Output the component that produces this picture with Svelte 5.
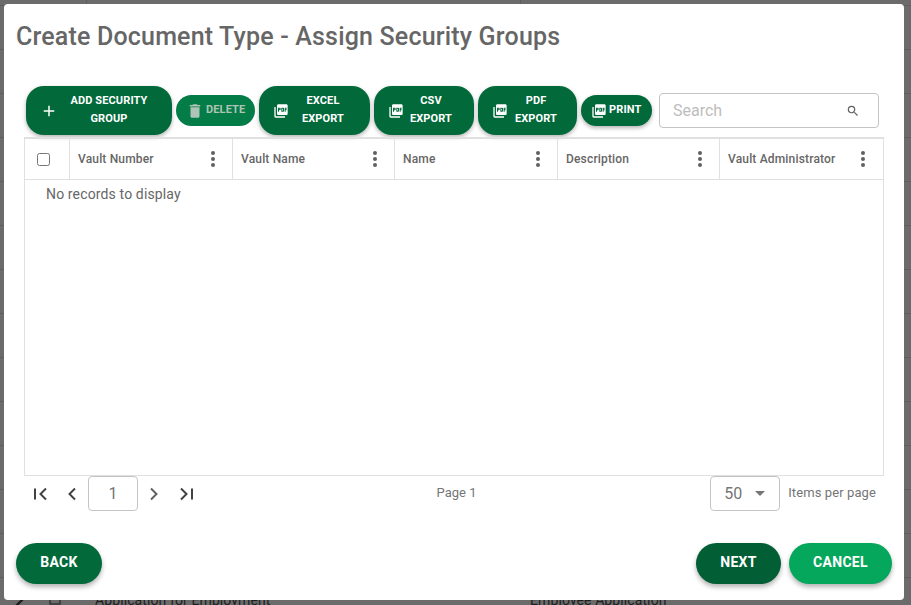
<script>
  const pdf = "M20 2H8c-1.1 0-2 .9-2 2v12c0 1.1.9 2 2 2h12c1.1 0 2-.9 2-2V4c0-1.1-.9-2-2-2zm-8.5 7.5c0 .83-.67 1.5-1.5 1.5H9v2H7.5V7H10c.83 0 1.5.67 1.5 1.5v1zm5 2c0 .83-.67 1.5-1.5 1.5h-2.5V7H15c.83 0 1.5.67 1.5 1.5v3zm4-3H19v1h1.5V11H19v2h-1.5V7h3v1.5zM9 9.5h1v-1H9v1zM4 6H2v14c0 1.1.9 2 2 2h14v-2H4V6zm10 5.5h1v-3h-1v3z";
  const cols = ["Vault Number", "Vault Name", "Name", "Description", "Vault Administrator"];
  const exportsList = [
    { a: "EXCEL", cls: "excel" },
    { a: "CSV", cls: "csv" },
    { a: "PDF", cls: "pdfb" }
  ];
  const rows = Array.from({ length: 13 });
</script>

<div class="page">
  <div class="backrows">
    <div class="backhead"><i></i><i></i></div>
    {#each rows as _}<div class="backrow"></div>{/each}
    <div class="backrow last">
      <svg class="bk1" viewBox="0 0 12 12" width="12" height="12"><path d="M2 11 9 4" stroke="#1c1c1c" stroke-width="2.4" fill="none"/></svg>
      <svg class="bk2" viewBox="0 0 14 14" width="14" height="14"><rect x="2" y="1" width="10" height="9" fill="none" stroke="#1c1c1c"/></svg>
      <span class="bt1">Application for Employment</span>
      <span class="bt2">Employee Application</span>
    </div>
  </div>
</div>

<div class="dialog">
  <h1>Create Document Type - Assign Security Groups</h1>

  <div class="toolbar">
    <button class="btn tall add">
      <svg viewBox="0 0 24 24" width="18" height="18"><path fill="currentColor" d="M19 13h-6v6h-2v-6H5v-2h6V5h2v6h6v2z"/></svg>
      <span>ADD SECURITY GROUP</span>
    </button>
    <button class="btn short del">
      <svg viewBox="0 0 24 24" width="18" height="18"><path fill="currentColor" d="M6 19c0 1.1.9 2 2 2h8c1.1 0 2-.9 2-2V7H6v12zM19 4h-3.5l-1-1h-5l-1 1H5v2h14V4z"/></svg>
      <span>DELETE</span>
    </button>
    {#each exportsList as e}
      <button class="btn tall {e.cls}">
        <svg viewBox="0 0 24 24" width="16" height="16"><path fill="currentColor" d={pdf}/></svg>
        <span>{e.a} EXPORT</span>
      </button>
    {/each}
    <button class="btn short print">
      <svg viewBox="0 0 24 24" width="16" height="16"><path fill="currentColor" d={pdf}/></svg>
      <span>PRINT</span>
    </button>
    <div class="search">
      <span>Search</span>
      <svg viewBox="0 0 24 24" width="14" height="14"><path fill="#616161" d="M15.5 14h-.79l-.28-.27A6.47 6.47 0 0 0 16 9.5 6.5 6.5 0 1 0 9.5 16c1.61 0 3.09-.59 4.23-1.57l.27.28v.79l5 4.99L20.49 19l-4.99-5zm-6 0C7.01 14 5 11.99 5 9.5S7.01 5 9.5 5 14 7.01 14 9.5 11.99 14 9.5 14z"/></svg>
    </div>
  </div>

  <div class="grid">
    <div class="head">
      <div class="cell check"><input type="checkbox" /></div>
      {#each cols as c}
        <div class="cell">
          <span>{c}</span>
          <svg viewBox="0 0 6 18" width="6" height="18"><circle cx="3" cy="3" r="2" fill="#616161"/><circle cx="3" cy="9" r="2" fill="#616161"/><circle cx="3" cy="15" r="2" fill="#616161"/></svg>
        </div>
      {/each}
    </div>
    <div class="empty">No records to display</div>
  </div>

  <div class="pager">
    <div class="pages">
      <svg class="pi first" viewBox="0 0 16 16" width="16" height="16"><path d="M2 2.5v11" stroke="#424242" stroke-width="2" fill="none"/><path d="M13 2.5 7.5 8l5.5 5.5" stroke="#424242" stroke-width="2" fill="none"/></svg>
      <svg class="pi prev" viewBox="0 0 16 16" width="16" height="16"><path d="M11 2.5 5.5 8l5.5 5.5" stroke="#424242" stroke-width="2" fill="none"/></svg>
      <div class="pageinput">1</div>
      <svg class="pi next" viewBox="0 0 16 16" width="16" height="16"><path d="M5 2.5 10.500 8 5 13.500" stroke="#616161" stroke-width="2" fill="none"/></svg>
      <svg class="pi last" viewBox="0 0 16 16" width="16" height="16"><path d="M3 2.5 8.500 8 3 13.500" stroke="#424242" stroke-width="2" fill="none"/><path d="M14 2.500v11" stroke="#424242" stroke-width="2" fill="none"/></svg>
    </div>
    <div class="pageinfo">Page 1</div>
    <div class="sizes">
      <div class="select"><span>50</span><i></i></div>
      <span class="ipp">Items per page</span>
    </div>
  </div>

  <div class="footer">
    <button class="fbtn back">BACK</button>
    <div class="right">
      <button class="fbtn nextb">NEXT</button>
      <button class="fbtn cancel">CANCEL</button>
    </div>
  </div>
</div>

<style>
  :global(body) {
    margin: 0;
    overflow: hidden;
    background: #6b6b6b;
    font-family: Roboto, "Liberation Sans", sans-serif;
  }
  .page {
    height: 605px;
    overflow: hidden;
    background: #6b6b6b;
  }
  .backhead {
    height: 5px;
    border-bottom: 1px solid #5e5e5e;
    display: flex;
    box-sizing: content-box;
  }
  .backhead i {
    display: block;
    width: 1px;
    height: 5px;
    background: #5e5e5e;
    margin-left: 86px;
  }
  .backhead i + i {
    margin-left: 433px;
  }
  .backrow {
    height: 43px;
    border-bottom: 1px solid #5e5e5e;
  }
  .backrow.last {
    position: relative;
    color: #1f1f1f;
    font-size: 14px;
    letter-spacing: 0.1px;
    line-height: 44px;
  }
  .bt1 { position: absolute; left: 95px; top: 0; }
  .bt2 { position: absolute; left: 530px; top: 0; }
  .bk1 { position: absolute; left: 14px; top: 17px; }
  .bk2 { position: absolute; left: 48px; top: 16px; }

  .dialog {
    position: absolute;
    left: 4px;
    top: 4px;
    width: 900px;
    height: 596px;
    box-sizing: border-box;
    background: #fff;
    border-radius: 4px;
    padding: 0 12px;
    display: flex;
    flex-direction: column;
  }
  h1 {
    margin: 0;
    padding-top: 17px;
    height: 82px;
    box-sizing: border-box;
    font-size: 25px;
    line-height: 32px;
    font-weight: 500;
    color: #666;
    letter-spacing: 0.18px;
  }
  .toolbar {
    display: flex;
    align-items: center;
    gap: 4px;
    padding-left: 10px;
    height: 49px;
  }
  .btn {
    border: none;
    color: #fff;
    background: #02693a;
    font-family: inherit;
    font-weight: 700;
    font-size: 11px;
    letter-spacing: 0.12px;
    line-height: 18px;
    display: flex;
    align-items: center;
    padding: 0;
    box-shadow: 0 2px 4px rgba(0, 0, 0, 0.3);
  }
  .btn span { padding-bottom: 2px; }
  .btn.tall {
    height: 49px;
    border-radius: 18px;
    text-align: center;
  }
  .btn.short {
    height: 31px;
    border-radius: 16px;
  }
  .add { width: 146px; padding-left: 14px; }
  .add span { width: 84px; margin-left: 9px; }
  .excel { width: 111px; padding-left: 14px; }
  .excel span { width: 60px; margin-left: 4px; }
  .csv { width: 100px; padding-left: 14px; }
  .csv span { width: 50px; margin-left: 2px; }
  .pdfb { width: 99px; padding-left: 14px; }
  .pdfb span { width: 50px; margin-left: 3px; }
  .del {
    width: 79px;
    padding-left: 10px;
    background: #037c47;
    color: #aec4b6;
    box-shadow: none;
  }
  .del span { margin-left: 2px; }
  .print { width: 71px; padding-left: 10px; }
  .print span { margin-left: 2px; }

  .search {
    margin-left: 3px;
    width: 220px;
    height: 35px;
    box-sizing: border-box;
    border: 1px solid #c4c4c4;
    border-radius: 4px;
    display: flex;
    align-items: center;
    justify-content: space-between;
    padding: 0 18px 0 13px;
    font-size: 16px;
    color: #bdbdbd;
    background: #fff;
  }

  .grid {
    margin: 2px 8px 0 8px;
    height: 339px;
    width: 860px;
    box-sizing: border-box;
    border: 1px solid #e0e0e0;
    border-top-width: 2px;
    color: #666;
  }
  .head {
    display: grid;
    grid-template-columns: 45px 163px 162px 163px 162px 1fr;
    height: 41px;
    box-sizing: border-box;
    border-bottom: 1px solid #e0e0e0;
  }
  .cell {
    border-right: 1px solid #e0e0e0;
    display: flex;
    align-items: center;
    justify-content: space-between;
    padding: 0 16px 0 8px;
    font-size: 12px;
    letter-spacing: 0.17px;
    font-weight: 500;
  }
  .cell:last-child { border-right: none; padding-right: 17px; }
  .cell.check {
    justify-content: flex-start;
    padding: 0 0 0 12px;
  }
  .cell.check input { margin: 0; width: 13px; height: 13px; }
  .empty {
    padding: 4px 21px;
    font-size: 14px;
    letter-spacing: 0.14px;
    line-height: 20px;
  }

  .pager {
    display: grid;
    grid-template-columns: 1fr auto 1fr;
    align-items: start;
    height: 67px;
    padding: 0 16px;
    color: #757575;
  }
  .pages {
    display: flex;
    align-items: center;
    height: 35px;
  }
  .pi.first { margin-left: 1px; }
  .pi.prev { margin-left: 15px; margin-right: 8px; }
  .pi.next { margin-left: 8px; }
  .pi.last { margin-left: 16px; }
  .pageinput {
    width: 50px;
    height: 35px;
    box-sizing: border-box;
    border: 1px solid #c4c4c4;
    border-radius: 4px;
    text-align: center;
    line-height: 33px;
    font-size: 16px;
    color: #757575;
  }
  .pageinfo {
    font-size: 13px;
    line-height: 34px;
    margin-left: 5px;
  }
  .sizes {
    display: flex;
    justify-content: flex-end;
    align-items: center;
    gap: 8px;
    height: 35px;
  }
  .select {
    width: 70px;
    height: 35px;
    box-sizing: border-box;
    border: 1px solid #c4c4c4;
    border-radius: 4px;
    display: flex;
    align-items: center;
    justify-content: space-between;
    padding: 0 14px 0 13px;
    font-size: 16px;
    color: #757575;
  }
  .select i {
    display: block;
    border-left: 5px solid transparent;
    border-right: 5px solid transparent;
    border-top: 5px solid #757575;
  }
  .ipp { font-size: 13px; letter-spacing: 0.1px; margin-top: -2px; margin-right: 0; padding-left: 0; }
  .sizes { gap: 8px; }
  .select { margin-right: 0; }

  .footer {
    display: flex;
    justify-content: space-between;
  }
  .right { display: flex; gap: 8px; }
  .fbtn {
    border: none;
    height: 41px;
    border-radius: 21px;
    color: #fff;
    font-family: inherit;
    font-weight: 700;
    font-size: 14px;
    letter-spacing: 0.3px;
    box-shadow: 0 3px 5px rgba(0, 0, 0, 0.3);
    padding: 0 0 3px;
  }
  .back { width: 86px; background: #02693a; }
  .nextb { width: 85px; background: #025e34; }
  .cancel { width: 103px; background: #05a75c; }
</style>
